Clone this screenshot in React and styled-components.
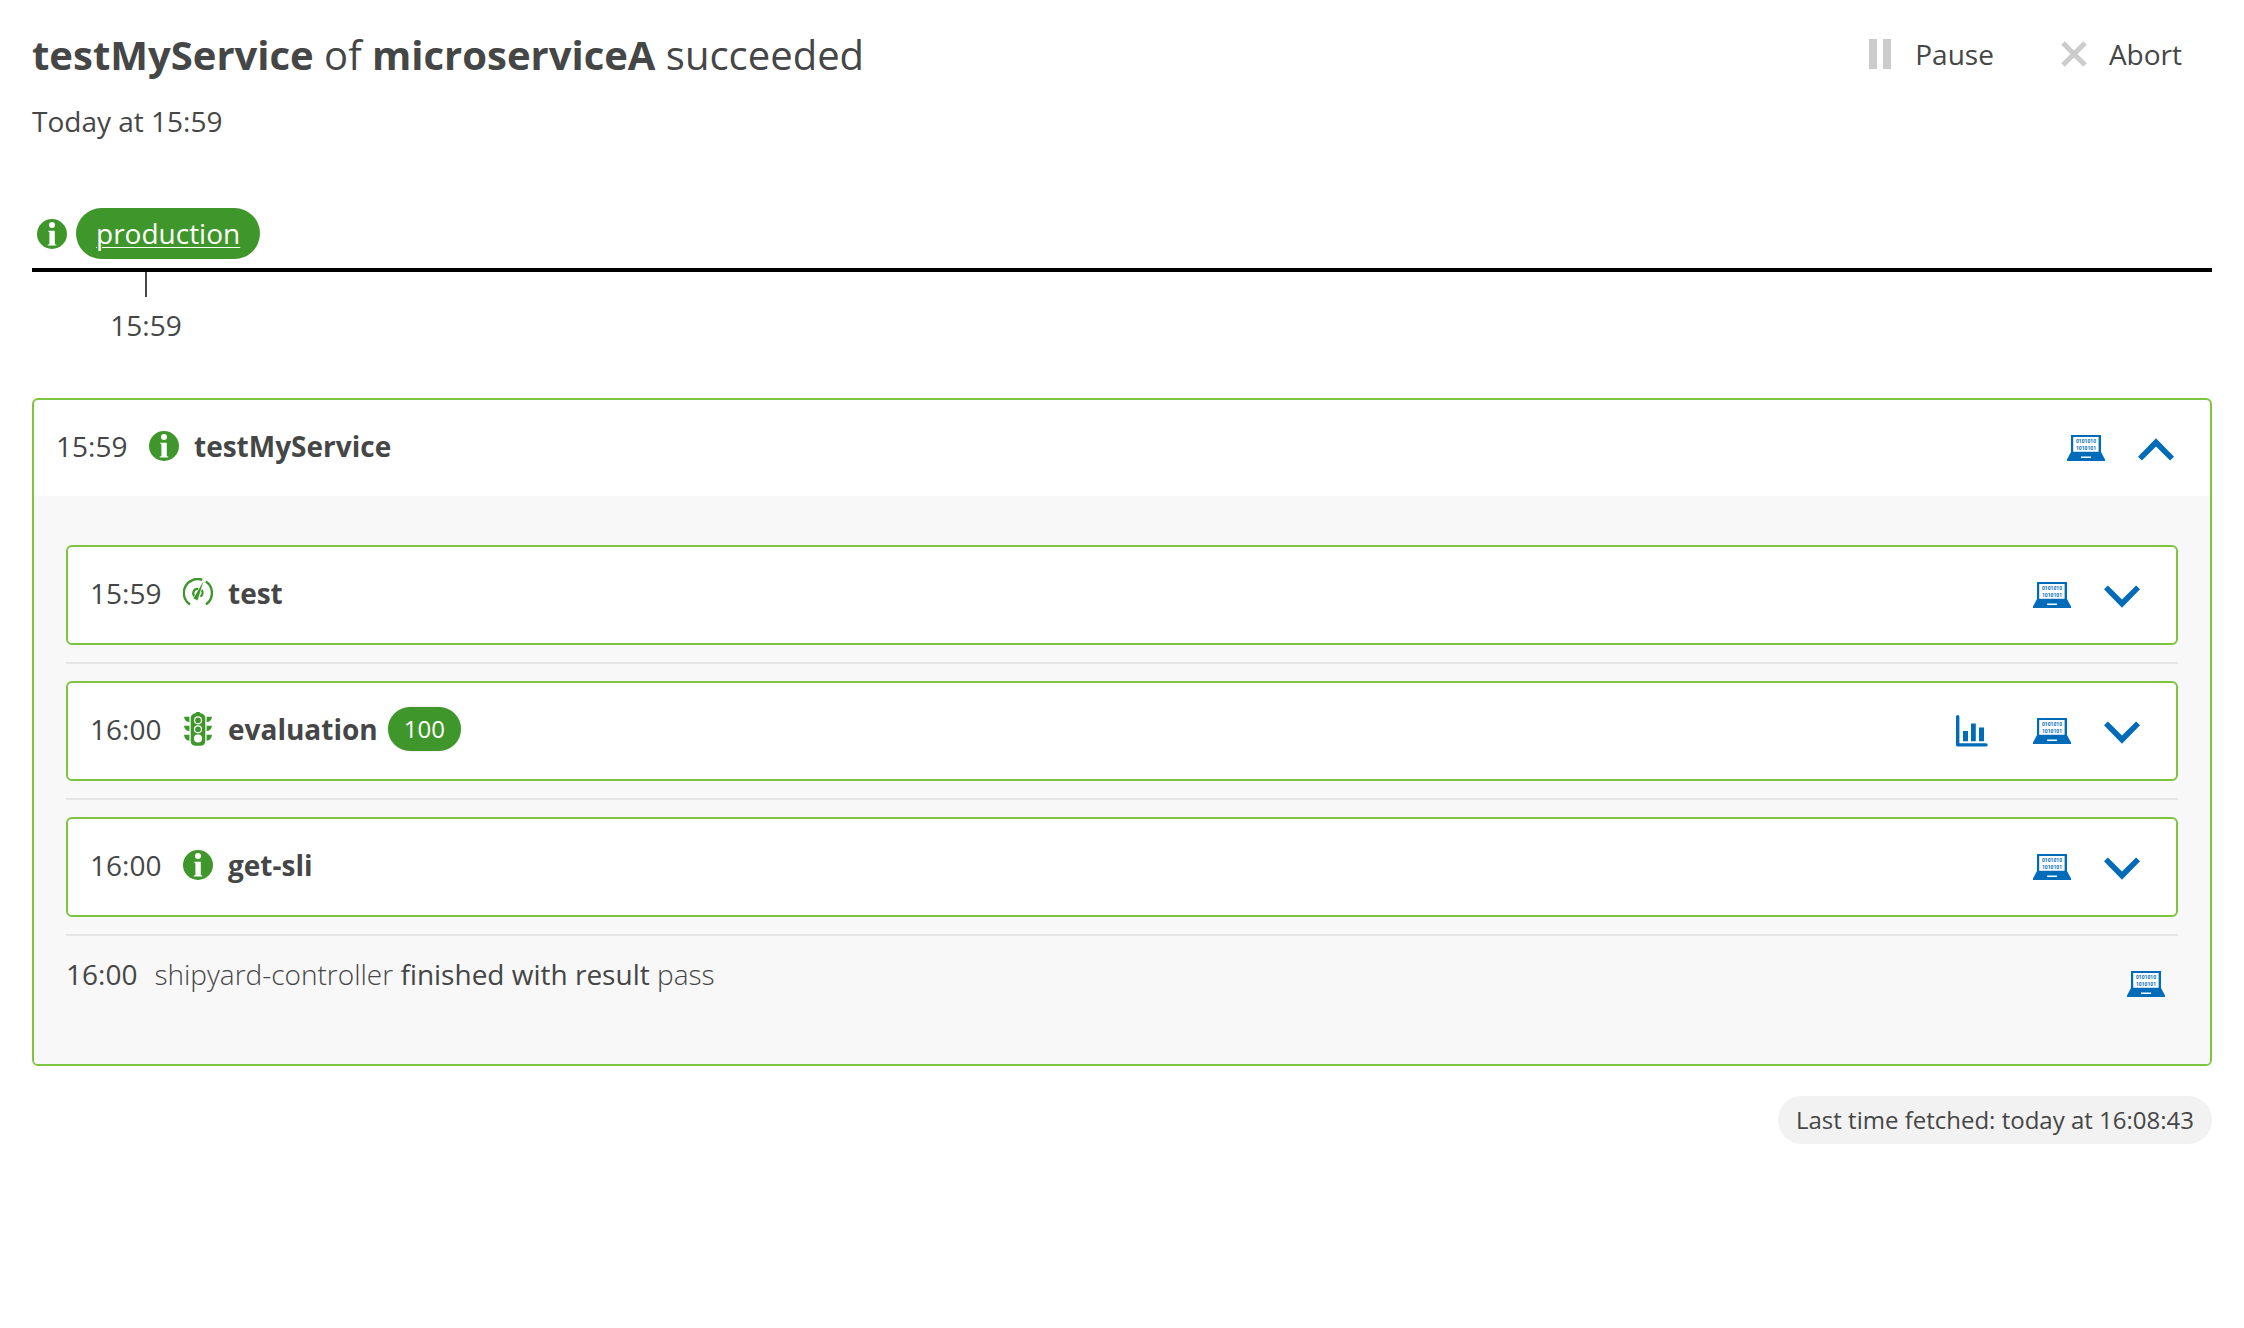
import React, { useState } from "react";
import styled, { createGlobalStyle } from "styled-components";

const GlobalStyle = createGlobalStyle`
  *, *::before, *::after { box-sizing: border-box; }
  body {
    margin: 0;
    background: #fff;
    color: #454646;
    font-family: "Open Sans", "Noto Sans", sans-serif;
    font-size: 28px;
    line-height: 38px;
  }
`;

const Page = styled.main`
  padding: 24px 32px;
`;

const Header = styled.header`
  display: flex;
  align-items: center;
  justify-content: space-between;
  height: 62px;
`;

const Title = styled.h1`
  margin: 0;
  font-size: 40px;
  line-height: 48px;
  font-weight: 400;
`;

const Actions = styled.div`
  display: flex;
  gap: 67px;
  padding-right: 30px;
`;

const ActionButton = styled.button`
  display: flex;
  align-items: center;
  gap: ${(p) => p.$gap}px;
  padding: 0 0 2px;
  border: 0;
  background: none;
  color: inherit;
  font: inherit;
`;

const Started = styled.p`
  margin: 16px 0 68px;
`;

const StageRow = styled.div`
  display: flex;
  align-items: center;
  gap: 9px;
  padding: 0 5px 9px;
  border-bottom: 4px solid #000;
`;

const StageLink = styled.a`
  padding: 0 20px;
  border-radius: 26px;
  background: #3f962a;
  color: #fff;
  line-height: 51px;
  text-decoration: underline;
  text-decoration-thickness: 1px;
  text-underline-offset: 3px;
`;

const StageTime = styled.div`
  display: flex;
  flex-direction: column;
  align-items: center;
  gap: 9px;
  width: 228px;
  margin-bottom: 54px;

  &::before {
    content: "";
    width: 2px;
    height: 25px;
    background: #454646;
  }
`;

const Card = styled.section`
  border: 2px solid #7dc540;
  border-radius: 6px;
  background: #fff;
  overflow: hidden;
`;

const CardHeader = styled.div`
  display: flex;
  align-items: center;
  height: 96px;
  padding: 0 36px 0 22px;
`;

const CardTitle = styled.h2`
  display: flex;
  align-items: center;
  gap: 15px;
  flex: 1;
  margin: 0;
  padding-bottom: 4px;
  font-size: 28px;
  line-height: 38px;
  font-weight: 700;
`;

const CardTime = styled.time`
  width: 78px;
  font-weight: 400;
`;

const IconBox = styled.span`
  display: flex;
  justify-content: center;
  width: 30px;
`;

const CardName = styled.span`
  display: flex;
  align-items: center;
  gap: 10px;
`;

const Score = styled.span`
  padding: 0 16px;
  border-radius: 22px;
  background: #3f962a;
  box-shadow: 0 0 2px #d0d0d0;
  color: #fff;
  font-size: 24px;
  line-height: 44px;
  font-weight: 400;
`;

const CardTools = styled.div`
  display: flex;
  align-items: center;
  gap: 33px;
`;

const IconButton = styled.button`
  display: flex;
  padding: ${(p) => (p.$low ? "3px 0 0" : "0")};
  margin-right: ${(p) => (p.$wide ? "12px" : "0")};
  border: 0;
  background: none;
  color: #006bb8;
  cursor: pointer;
`;

const CardBody = styled.div`
  padding: 49px 32px 67px;
  background: #f8f8f8;
`;

const Task = styled.div`
  padding-bottom: 17px;
  margin-bottom: 17px;
  border-bottom: 2px solid #e6e6e6;
`;

const Result = styled.div`
  display: flex;
  align-items: flex-start;
  gap: 17px;
  padding: 2px 13px 0 0;
`;

const ResultTime = styled.time`
  font-weight: 500;
`;

const ResultText = styled.p`
  flex: 1;
  margin: 0;
  font-weight: 300;

  strong { font-weight: 500; }
`;

const ResultTool = styled.div`
  padding-top: 16px;
`;

const Footer = styled.footer`
  display: flex;
  justify-content: flex-end;
  margin-top: 30px;
`;

const Fetched = styled.span`
  padding: 0 18px;
  border-radius: 24px;
  background: #f2f2f2;
  font-size: 24px;
  line-height: 48px;
`;

const PauseIcon = () => (
  <svg width="22" height="30" viewBox="0 0 22 30" fill="#ccc" aria-hidden="true">
    <path d="M0 0h8v30H0zM14 0h8v30h-8z" />
  </svg>
);

const AbortIcon = () => (
  <svg width="26" height="26" viewBox="0 0 26 26" stroke="#ccc" strokeWidth="5" aria-hidden="true">
    <path d="M2 2l22 22M24 2L2 24" />
  </svg>
);

const InfoIcon = () => (
  <svg width="30" height="30" viewBox="0 0 30 30" aria-hidden="true">
    <circle cx="15" cy="15" r="15" fill="#3f962a" />
    <circle cx="15" cy="6" r="3" fill="#fff" />
    <path fill="#fff" d="M11.2 11.8h6.6v13c0 .5.4.7 1.5.8v.9h-8.6v-.9c1.3-.1 1.7-.3 1.7-.8V13.700c0-.6-.4-.8-1.200-.9z" />
  </svg>
);

const GaugeIcon = () => (
  <svg width="30" height="30" viewBox="0 0 30 30" fill="none" aria-hidden="true">
    <g stroke="#3f962a">
      <path strokeWidth="2.4" d="M7 26.400A13.800 13.800 0 0 1 19.300 1.900M22.800 3.600A13.800 13.800 0 0 1 23 26.400" />
      <path strokeWidth="2.2" d="M12 18.600A4.200 4.200 0 0 1 15.400 11.100M18.600 12.100A4.200 4.200 0 0 1 17.400 18.600" />
    </g>
    <path d="M21.400 1.200L10 20.600l4.800 2.200z" fill="#3f962a" stroke="#fff" strokeWidth=".6" />
  </svg>
);

const TrafficLightIcon = () => (
  <svg width="28" height="34" viewBox="0 0 28 34" aria-hidden="true">
    <g fill="#3f962a">
      <path d="M11.500 1.200Q12 0 13 0h2q1 0 1.500 1.200 4.800.8 4.800 5v22q0 5.500-5 5.500h-4.600q-5 0-5-5.500v-22q0-4.200 4.800-5z" />
      <path d="M0 4.700h5.400v5.300Q.6 9.800 0 4.700zM0 13.700h5.400V19Q.6 18.800 0 13.700zM0 22.700h5.400v6Q.6 28.500 0 22.700z" />
      <path d="M28 4.700h-5.400v5.300q4.800-.2 5.400-5.300zM28 13.700h-5.400V19q4.800-.2 5.400-5.300zM28 22.700h-5.400v6q4.800-.2 5.400-6z" />
    </g>
    <g fill="none" stroke="#fff" strokeWidth="1.2">
      <circle cx="14" cy="8.3" r="3.5" />
      <circle cx="14" cy="17.3" r="3.5" />
    </g>
    <circle cx="14" cy="26.5" r="4.1" fill="#fff" />
  </svg>
);

const LaptopIcon = () => (
  <svg width="38" height="26" viewBox="0 0 38 26" aria-hidden="true">
    <path d="M4 0h30v17l4 7.500V26H0v-1.500L4 17z" fill="#006bb8" />
    <path d="M6.200 2h25.400v14.800H6.200zM14 21.400h10V23H14z" fill="#fff" />
    <g fill="#006bb8" fontFamily="Roboto, sans-serif" fontSize="5" fontWeight="700" textAnchor="middle">
      <text x="19" y="8.2">0101010</text>
      <text x="19" y="14.5">1010101</text>
    </g>
  </svg>
);

const ChartIcon = () => (
  <svg width="32" height="32" viewBox="0 0 32 32" fill="#006bb8" aria-hidden="true">
    <path d="M0 1.700a1.700 1.700 0 0 1 3.400 0V28.200H30a1.700 1.700 0 0 1 0 3.400H1.700A1.700 1.700 0 0 1 0 29.900z" />
    <path d="M7 16h5v10.300H7zM15 8.500h4.800v17.800H15zM23 12.500h5v13.800h-5z" />
  </svg>
);

const ChevronIcon = ({ open }) => (
  <svg width="36" height="23" viewBox="0 0 36 23" fill="#006bb8" aria-hidden="true">
    <path
      d={
        open
          ? "M0 18.700L18 .3l18 18.400-3.900 3.800L18 8.500 3.900 22.500z"
          : "M0 4.300L3.900.5 18 14.500 32.100.5 36 4.300 18 22.700z"
      }
    />
  </svg>
);

const TASKS = [
  { time: "15:59", name: "test", Icon: GaugeIcon },
  { time: "16:00", name: "evaluation", Icon: TrafficLightIcon, score: 100 },
  { time: "16:00", name: "get-sli", Icon: InfoIcon },
];

function Event({ time, name, Icon, score, initiallyOpen = false, children }) {
  const [open, setOpen] = useState(initiallyOpen);
  return (
    <Card>
      <CardHeader>
        <CardTitle>
          <CardTime>{time}</CardTime>
          <IconBox><Icon /></IconBox>
          <CardName>
            {name}
            {score !== undefined && <Score>{score}</Score>}
          </CardName>
        </CardTitle>
        <CardTools>
          {score !== undefined && (
            <IconButton type="button" aria-label="Show chart" $wide><ChartIcon /></IconButton>
          )}
          <IconButton type="button" aria-label="Show payload"><LaptopIcon /></IconButton>
          <IconButton
            type="button"
            aria-label={`Toggle ${name}`}
            aria-expanded={open}
            $low
            onClick={() => setOpen(!open)}
          >
            <ChevronIcon open={open} />
          </IconButton>
        </CardTools>
      </CardHeader>
      {open && children}
    </Card>
  );
}

export default function App() {
  return (
    <Page>
      <GlobalStyle />
      <Header>
        <Title><b>testMyService</b> of <b>microserviceA</b> succeeded</Title>
        <Actions>
          <ActionButton type="button" disabled $gap={24}><PauseIcon />Pause</ActionButton>
          <ActionButton type="button" disabled $gap={22}><AbortIcon />Abort</ActionButton>
        </Actions>
      </Header>
      <Started>Today at 15:59</Started>
      <StageRow>
        <InfoIcon />
        <StageLink href="#production">production</StageLink>
      </StageRow>
      <StageTime><time>15:59</time></StageTime>
      <Event time="15:59" name="testMyService" Icon={InfoIcon} initiallyOpen>
        <CardBody>
          {TASKS.map((task) => (
            <Task key={task.name}><Event {...task} /></Task>
          ))}
          <Result>
            <ResultTime>16:00</ResultTime>
            <ResultText>shipyard-controller <strong>finished with result</strong> pass</ResultText>
            <ResultTool>
              <IconButton type="button" aria-label="Show payload"><LaptopIcon /></IconButton>
            </ResultTool>
          </Result>
        </CardBody>
      </Event>
      <Footer><Fetched>Last time fetched: today at 16:08:43</Fetched></Footer>
    </Page>
  );
}
